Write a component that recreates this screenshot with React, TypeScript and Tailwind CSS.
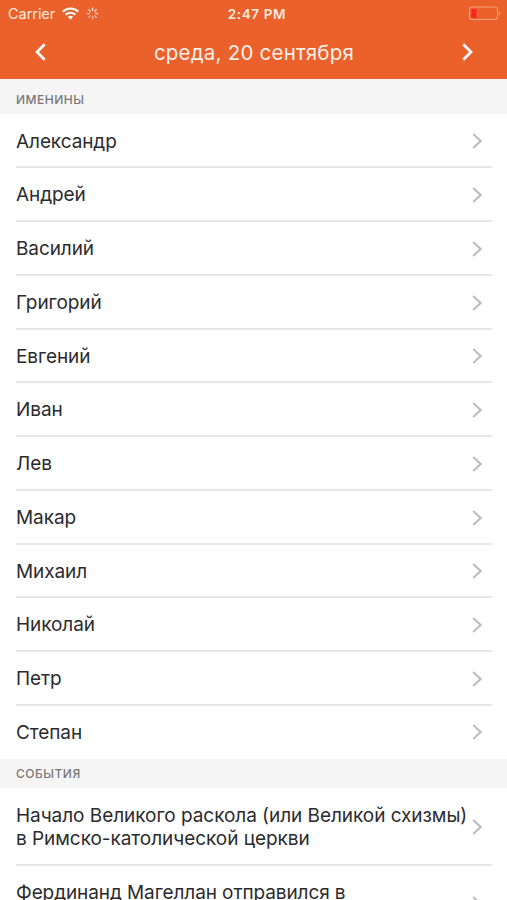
import React from "react";

const names = [
  "Александр",
  "Андрей",
  "Василий",
  "Григорий",
  "Евгений",
  "Иван",
  "Лев",
  "Макар",
  "Михаил",
  "Николай",
  "Петр",
  "Степан",
];

function Disclosure({ className = "" }: { className?: string }) {
  return (
    <svg className={`h-4 w-[10px] shrink-0 text-[#bdbdc0] ${className}`} viewBox="0 0 10 16" fill="none">
      <path d="M1.2 1.1 8.6 8 1.2 14.9" stroke="currentColor" strokeWidth="2.1" />
    </svg>
  );
}

function Wifi() {
  return (
    <svg className="h-[13px] w-[17px]" viewBox="0 0 17 13" fill="none" stroke="#fff" strokeWidth="2.2">
      <path d="M.8 4.7C5.1.4 11.9.4 16.2 4.7" />
      <path d="M3.7 7.7c2.7-2.6 6.9-2.6 9.6 0" />
      <path d="M8.5 12.4 5.9 9.8c1.5-1.3 3.7-1.3 5.2 0z" fill="#fff" stroke="none" />
    </svg>
  );
}

const spokes = [1, 0.9, 0.8, 0.7, 0.6, 0.5, 0.65, 0.85];

function Spinner() {
  return (
    <svg className="h-[13px] w-[13px]" viewBox="-6.5 -6.5 13 13" stroke="#ffe3d6" strokeWidth="1.4" strokeLinecap="round">
      {spokes.map((opacity, i) => (
        <path key={i} d="M0-3V-5.2" opacity={opacity} transform={`rotate(${i * 45})`} />
      ))}
    </svg>
  );
}

function Battery() {
  return (
    <svg className="h-[15px] w-[33px]" viewBox="0 0 33 15" fill="none">
      <rect x="1.5" y="1" width="28" height="12.5" rx="2.5" stroke="#f6a17e" strokeWidth="1.1" />
      <rect x="3.4" y="2.9" width="5.2" height="8.8" rx=".8" fill="#fb2525" />
      <path d="M30.9 5.2c1.8.6 1.8 3.6 0 4.2z" fill="#f6a17e" />
    </svg>
  );
}

function SectionTitle({ children, className }: { children: string; className: string }) {
  return (
    <h2 className={`flex items-center bg-[#f5f5f5] pl-4 text-[12px] font-medium text-[#77777a] ${className}`}>
      {children}
    </h2>
  );
}

export default function App() {
  return (
    <main
      lang="ru"
      className="h-[900px] w-full overflow-hidden bg-white font-['Inter','Liberation_Sans',sans-serif] text-[#2b2b2d]"
    >
      <header className="h-[79px] bg-[#ea612c] text-white">
        <div className="grid h-[27px] grid-cols-3 items-center pr-[6px] pl-2">
          <div className="flex items-center text-[#ffe9df]">
            <span className="text-[14.5px] tracking-[-0.05px]">Carrier</span>
            <span className="ml-[7px]"><Wifi /></span>
            <span className="ml-[7px]"><Spinner /></span>
          </div>
          <span className="pt-px pl-[5px] text-center text-[13.5px] font-semibold tracking-[0.6px] text-[#ffe9df]">2:47 PM</span>
          <span className="justify-self-end"><Battery /></span>
        </div>
        <nav className="flex h-[50px] items-center justify-between pr-[34px] pl-[35px]">
          <svg className="h-[18px] w-[11px]" viewBox="0 0 11 18" fill="none">
            <path d="M9.7 1.3 2 9l7.7 7.7" stroke="#fff" strokeWidth="2.7" />
          </svg>
          <h1 className="pt-[2px] text-[20.5px] tracking-[0.22px] text-[#fff0e9]">среда, 20 сентября</h1>
          <svg className="h-[18px] w-[11px]" viewBox="0 0 11 18" fill="none">
            <path d="M1.3 1.3 9 9l-7.7 7.7" stroke="#fff" strokeWidth="2.7" />
          </svg>
        </nav>
      </header>

      <SectionTitle className="h-[35px] pt-[6px] tracking-[0.5px]">ИМЕНИНЫ</SectionTitle>
      <ul className="pt-[0.5px] pl-4 tracking-[-0.08px]">
        {names.map((name) => (
          <li
            key={name}
            className="mr-[15px] flex h-[53.75px] items-center justify-between border-b-2 border-[#e7e7e8] pt-[2px] pr-[10px] text-[19px] last:h-[53.25px] last:border-transparent"
          >
            <span className="pt-[1px]">{name}</span>
            <Disclosure />
          </li>
        ))}
      </ul>

      <SectionTitle className="h-[29px] tracking-[0.5px]">СОБЫТИЯ</SectionTitle>
      <ul className="pl-4 text-[19px] leading-[23.5px] tracking-[-0.05px]">
        <li className="mr-[15px] flex h-[78px] items-center justify-between border-b-2 border-[#e7e7e8] pt-px pr-[10px]">
          <span className="pt-px whitespace-nowrap">
            Начало Великого раскола (или Великой схизмы)
            <br />в Римско-католической церкви
          </span>
          <Disclosure />
        </li>
        <li className="mr-[15px] flex items-start justify-between pt-[15px] pr-[10px]">
          <span className="whitespace-nowrap tracking-[-0.1px]">Фердинанд Магеллан отправился в</span>
          <Disclosure className="mt-[15px]" />
        </li>
      </ul>
    </main>
  );
}
